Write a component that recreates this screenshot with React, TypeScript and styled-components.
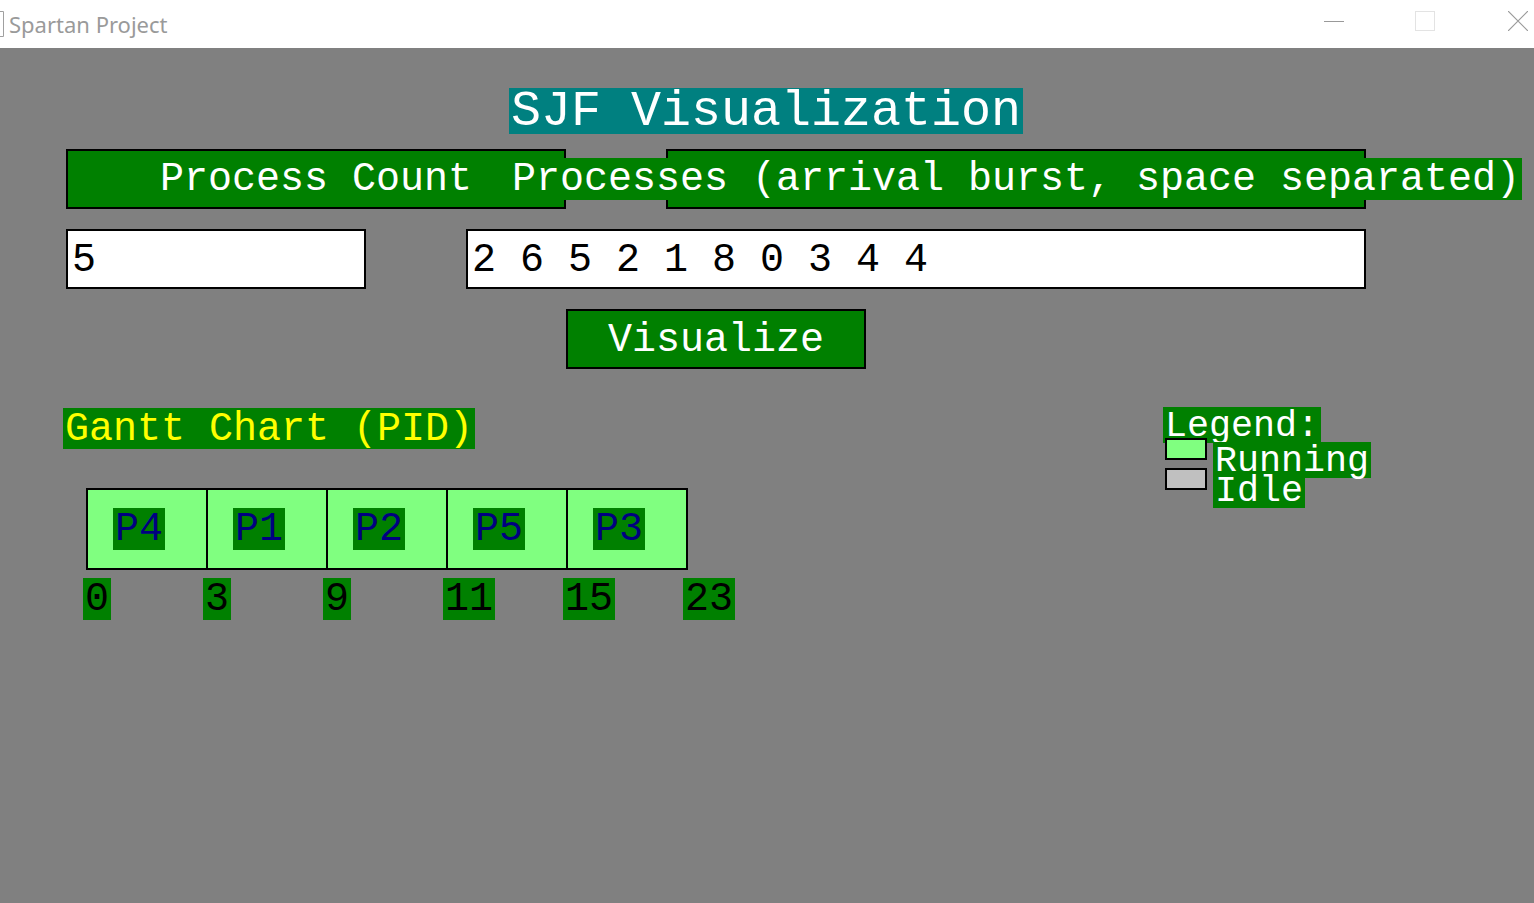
import React from "react"
import styled, { createGlobalStyle } from "styled-components"

const GlobalStyle = createGlobalStyle`
  html, body {
    margin: 0;
    padding: 0;
    background: #808080;
  }
  #root {
    height: 903px;
  }
`

const MONO = `"Liberation Mono", "Courier New", monospace`

const Window = styled.div`
  display: flex;
  flex-direction: column;
  width: 1534px;
  height: 903px;
  overflow: hidden;
`

const TitleBar = styled.header`
  display: flex;
  align-items: center;
  height: 48px;
  background: #ffffff;
  flex-shrink: 0;
`
const AppIcon = styled.svg`
  width: 5px;
  height: 26px;
  margin-top: -1px;
`
const Caption = styled.span`
  margin-left: 4px;
  margin-top: 0;
  font-family: "Noto Sans", "Open Sans", sans-serif;
  font-size: 22px;
  color: #9a9a9a;
`
const Controls = styled.div`
  display: flex;
  align-self: flex-start;
  margin-left: auto;
  padding: 11px 6px 0 0;
`
const ControlIcon = styled.svg<{ $gap: number }>`
  width: 20px;
  height: 20px;
  margin-left: ${p => p.$gap}px;
`

const Canvas = styled.main`
  flex: 1;
  display: flex;
  flex-direction: column;
  align-items: flex-start;
  padding: 40px 0 0 66px;
  background: #808080;
  font-family: ${MONO};
`

const Heading = styled.h1`
  margin: 0 0 0 443px;
  height: 46px;
  padding: 0 2px;
  line-height: 48px;
  font-size: 50px;
  font-weight: normal;
  color: #ffffff;
  background: #008080;
  white-space: nowrap;
`

const Row = styled.div<{ $top: number }>`
  display: flex;
  margin-top: ${p => p.$top}px;
`

const LabelBox = styled.div<{ $w: number; $ml?: number }>`
  display: flex;
  align-items: center;
  justify-content: center;
  box-sizing: border-box;
  width: ${p => p.$w}px;
  height: 60px;
  margin-left: ${p => p.$ml ?? 0}px;
  border: 2px solid #000000;
  background: #008000;
`
const LabelText = styled.span`
  flex-shrink: 0;
  height: 42px;
  padding: 0 2px;
  line-height: 44px;
  font-size: 40px;
  color: #ffffff;
  background: #008000;
  white-space: nowrap;
`

const Field = styled.input<{ $w: number; $ml?: number }>`
  box-sizing: border-box;
  width: ${p => p.$w}px;
  height: 60px;
  margin: 0 0 0 ${p => p.$ml ?? 0}px;
  padding: 2px 2px 0 4px;
  border: 2px solid #000000;
  border-radius: 0;
  background: #ffffff;
  font-family: ${MONO};
  font-size: 40px;
  color: #000000;
  outline: none;
`

const VisualizeButton = styled.button`
  box-sizing: border-box;
  width: 300px;
  height: 60px;
  margin: 20px 0 0 500px;
  padding: 2px 0 0;
  border: 2px solid #000000;
  border-radius: 0;
  background: #008000;
  font-family: ${MONO};
  font-size: 40px;
  color: #ffffff;
  cursor: pointer;
`

const ChartRow = styled.section`
  display: flex;
  align-items: flex-start;
  margin: 39px 0 0 -3px;
`
const ChartColumn = styled.div`
  display: flex;
  flex-direction: column;
  align-items: flex-start;
  width: 1100px;
`
const ChartTitle = styled.h2`
  margin: 0;
  height: 41px;
  padding: 0 2px;
  line-height: 43px;
  font-size: 40px;
  font-weight: normal;
  color: #ffff00;
  background: #008000;
  white-space: nowrap;
`

const Bars = styled.div`
  display: flex;
  margin: 39px 0 0 23px;
`
const Bar = styled.div<{ $last: boolean; $idle?: boolean }>`
  box-sizing: border-box;
  width: ${p => (p.$last ? 122 : 120)}px;
  height: 82px;
  padding: 18px 0 0 25px;
  border: 2px solid #000000;
  border-right-width: ${p => (p.$last ? 2 : 0)}px;
  background: ${p => (p.$idle ? "#c0c0c0" : "#80ff80")};
`
const Chip = styled.span<{ $color: string }>`
  display: inline-block;
  height: 42px;
  padding: 0 2px;
  line-height: 44px;
  font-size: 40px;
  color: ${p => p.$color};
  background: #008000;
`

const Ticks = styled.div`
  display: flex;
  margin: 8px 0 0 20px;
`
const Tick = styled.div`
  width: 120px;
`

const Legend = styled.aside`
  display: flex;
  flex-direction: column;
  align-items: flex-start;
  margin-top: -1px;
`
const LegendText = styled.span<{ $h?: number; $lh?: number; $mt?: number }>`
  display: inline-block;
  height: ${p => p.$h ?? 36}px;
  margin-top: ${p => p.$mt ?? 0}px;
  padding: 0 2px;
  line-height: ${p => p.$lh ?? 38}px;
  font-size: 36.67px;
  color: #ffffff;
  background: #008000;
  white-space: nowrap;
`
const LegendRow = styled.div<{ $mt: number }>`
  display: flex;
  align-items: flex-start;
  margin-top: ${p => p.$mt}px;
`
const Swatch = styled.span<{ $fill: string }>`
  box-sizing: border-box;
  width: 42px;
  height: 22px;
  margin: 0 6px 0 2px;
  border: 2px solid #000000;
  background: ${p => p.$fill};
`

const slots = [
  { pid: "P4", start: 0 },
  { pid: "P1", start: 3 },
  { pid: "P2", start: 9 },
  { pid: "P5", start: 11 },
  { pid: "P3", start: 15 },
]
const finish = 23

const App = () => {
  return (
    <Window>
      <GlobalStyle />
      <TitleBar>
        <AppIcon viewBox="0 0 5 26">
          <path d="M0 0.5 H3.5 V25.5 H0" fill="none" stroke="#a0a0a0" strokeWidth="1" />
        </AppIcon>
        <Caption>Spartan Project</Caption>
        <Controls>
          <ControlIcon $gap={0} viewBox="0 0 20 20">
            <line x1="0" y1="10.5" x2="20" y2="10.5" stroke="#999999" strokeWidth="1" />
          </ControlIcon>
          <ControlIcon $gap={71} viewBox="0 0 20 20">
            <rect x="0.5" y="0.5" width="19" height="19" fill="none" stroke="#e3e3e3" strokeWidth="1" />
          </ControlIcon>
          <ControlIcon $gap={73} viewBox="0 0 20 20">
            <path d="M0 0 L20 20 M20 0 L0 20" stroke="#999999" strokeWidth="1.2" />
          </ControlIcon>
        </Controls>
      </TitleBar>

      <Canvas>
        <Heading>SJF Visualization</Heading>

        <Row $top={15}>
          <LabelBox $w={500}>
            <LabelText>Process Count</LabelText>
          </LabelBox>
          <LabelBox $w={700} $ml={100}>
            <LabelText>Processes (arrival burst, space separated)</LabelText>
          </LabelBox>
        </Row>

        <Row $top={20}>
          <Field $w={300} defaultValue="5" readOnly />
          <Field $w={900} $ml={100} defaultValue="2 6 5 2 1 8 0 3 4 4" readOnly />
        </Row>

        <VisualizeButton>Visualize</VisualizeButton>

        <ChartRow>
          <ChartColumn>
            <ChartTitle>Gantt Chart (PID)</ChartTitle>
            <Bars>
              {slots.map((s, i) => (
                <Bar key={s.pid} $last={i === slots.length - 1}>
                  <Chip $color="#000080">{s.pid}</Chip>
                </Bar>
              ))}
            </Bars>
            <Ticks>
              {[...slots.map(s => s.start), finish].map(t => (
                <Tick key={t}>
                  <Chip $color="#000000">{t}</Chip>
                </Tick>
              ))}
            </Ticks>
          </ChartColumn>

          <Legend>
            <LegendText>Legend:</LegendText>
            <LegendRow $mt={-5}>
              <Swatch $fill="#80ff80" />
              <LegendText $mt={4}>Running</LegendText>
            </LegendRow>
            <LegendRow $mt={-10}>
              <Swatch $fill="#c0c0c0" />
              <LegendText $mt={10} $h={30} $lh={26}>Idle</LegendText>
            </LegendRow>
          </Legend>
        </ChartRow>
      </Canvas>
    </Window>
  )
}

export default App
